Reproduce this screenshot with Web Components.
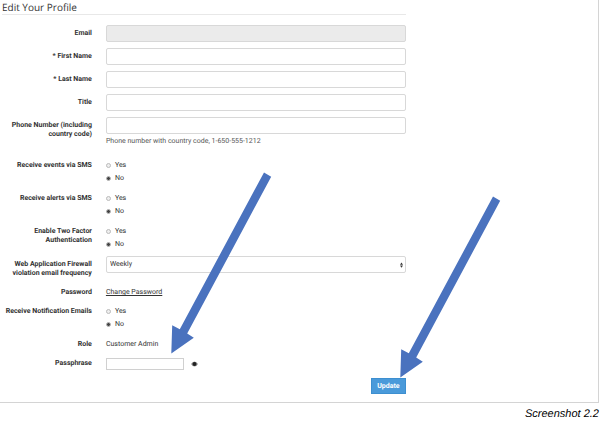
<!DOCTYPE html>
<html lang="en">
<head>
<meta charset="utf-8">
<meta name="viewport" content="width=device-width, initial-scale=1">
<title>Edit Your Profile</title>
<style>
  body {
    margin: 0;
    background: white;
    color: #333;
    font-family: Roboto, "Open Sans", sans-serif;
    font-size: 7px;
    line-height: 9px;
    text-rendering: geometricPrecision;
  }
</style>
</head>
<body>
<profile-page></profile-page>

<script>
  // Rules shared by every row: label column on the left, control on the right
  const rowStyles = `
    :host {
      display: block;
    }
    .row {
      display: grid;
      grid-template-columns: 3fr 10fr;
      column-gap: 14px;
    }
    .label {
      text-align: right;
      font-weight: 700;
    }
    .label.boxed {
      padding-top: 4px;
    }
    input, select {
      box-sizing: border-box;
      font: inherit;
      color: inherit;
      text-rendering: inherit;
    }
    .box {
      width: 100%;
      height: 17px;
      margin: 0;
      padding: 0 3px;
      border: 1px solid #d8d8d8;
      border-radius: 2px;
      background: white;
    }
  `;

  class TextField extends HTMLElement {
    constructor() {
      super();
      this.attachShadow({ mode: "open" });
    }

    connectedCallback() {
      const hint = this.getAttribute("hint");
      this.shadowRoot.innerHTML = `
        <style>
          ${rowStyles}
          .box:disabled {
            background: #ebebeb;
          }
          .hint {
            margin: 3px 0 5px;
            color: #555;
          }
        </style>
        <div class="row">
          <label class="label boxed" for="field">${this.getAttribute("label")}</label>
          <div>
            <input class="box" id="field" type="${this.getAttribute("type") || "text"}"
              ${this.hasAttribute("disabled") ? "disabled" : ""}>
            ${hint ? `<p class="hint">${hint}</p>` : ""}
          </div>
        </div>
      `;
    }
  }

  class RadioField extends HTMLElement {
    constructor() {
      super();
      this.attachShadow({ mode: "open" });
    }

    connectedCallback() {
      this.options = ["Yes", "No"];
      this.shadowRoot.innerHTML = `
        <style>
          ${rowStyles}
          :host {
            margin-top: 4px;
            padding-bottom: 1px;
          }
          .options {
            display: flex;
            flex-direction: column;
            align-items: flex-start;
            gap: 4px;
          }
          .option {
            display: flex;
            align-items: center;
            gap: 4px;
          }
          input {
            appearance: none;
            width: 5px;
            height: 5px;
            margin: 0;
            border: 1px solid #bbb;
            border-radius: 50%;
            background: #eee;
          }
          input:checked {
            background: #444;
          }
        </style>
        <div class="row">
          <span class="label" id="name">${this.getAttribute("label")}</span>
          <div class="options" role="radiogroup" aria-labelledby="name"></div>
        </div>
      `;
      this.renderOptions();
    }

    renderOptions() {
      const container = this.shadowRoot.querySelector(".options");
      this.options.forEach((text) => {
        const option = document.createElement("label");
        option.className = "option";
        option.innerHTML = `<input type="radio" name="choice" value="${text}"
          ${text === this.getAttribute("value") ? "checked" : ""}><span>${text}</span>`;
        container.appendChild(option);
      });
    }
  }

  class SelectField extends HTMLElement {
    constructor() {
      super();
      this.attachShadow({ mode: "open" });
    }

    connectedCallback() {
      const options = this.getAttribute("options").split(",");
      this.shadowRoot.innerHTML = `
        <style>
          ${rowStyles}
          .control {
            display: grid;
            align-items: center;
            align-self: start;
          }
          .control > * {
            grid-area: 1 / 1;
          }
          select {
            appearance: none;
          }
          svg {
            justify-self: end;
            margin-right: 3px;
            pointer-events: none;
          }
        </style>
        <div class="row">
          <label class="label boxed" for="field">${this.getAttribute("label")}</label>
          <div class="control">
            <select class="box" id="field">
              ${options.map((option) => `<option>${option}</option>`).join("")}
            </select>
            <svg width="3" height="6" viewBox="0 0 4 7" fill="#333" aria-hidden="true">
              <path d="M2 0L4 3H0zM0 4H4L2 7z"/>
            </svg>
          </div>
        </div>
      `;
    }
  }

  class StaticField extends HTMLElement {
    constructor() {
      super();
      this.attachShadow({ mode: "open" });
      this.shadowRoot.innerHTML = `
        <style>
          ${rowStyles}
          :host {
            margin-top: 4px;
          }
        </style>
        <div class="row">
          <span class="label"></span>
          <div><slot></slot></div>
        </div>
      `;
    }

    connectedCallback() {
      this.shadowRoot.querySelector(".label").textContent = this.getAttribute("label");
    }
  }

  class PassphraseField extends HTMLElement {
    constructor() {
      super();
      this.attachShadow({ mode: "open" });
      this.shadowRoot.innerHTML = `
        <style>
          ${rowStyles}
          .row, .control {
            align-items: center;
          }
          .control {
            display: flex;
            gap: 7px;
            height: 17px;
          }
          callout-arrow {
            --arrow-gap: 4px;
            flex: 0 0 26%;
          }
          input {
            display: block;
            width: 100%;
            height: 12px;
            margin: 0;
            padding: 0 3px;
            border: 1px solid #d0d0d0;
          }
          button {
            display: flex;
            padding: 0;
            border: 0;
            background: none;
          }
        </style>
        <div class="row">
          <label class="label" for="field">Passphrase</label>
          <div class="control">
            <callout-arrow><input id="field" type="password"></callout-arrow>
            <button type="button" aria-label="Show passphrase">
              <svg width="7" height="6" viewBox="0 0 14 12">
                <path d="M0 6Q3 1 7 1T14 6Q11 11 7 11T0 6z" fill="#999"/>
                <circle cx="7" cy="6" r="4" fill="#222"/>
              </svg>
            </button>
          </div>
        </div>
      `;
    }
  }

  // Wraps a control and draws a large arrow with its tip above the control's top edge
  class CalloutArrow extends HTMLElement {
    constructor() {
      super();
      this.attachShadow({ mode: "open" });
      this.shadowRoot.innerHTML = `
        <style>
          :host {
            display: block;
            position: relative;
          }
          svg {
            position: absolute;
            bottom: calc(100% + var(--arrow-gap, 0px));
            left: 84%;
            z-index: 1;
            pointer-events: none;
          }
        </style>
        <slot></slot>
        <svg width="101" height="182" viewBox="0 0 101 182" fill="#4a72be" aria-hidden="true">
          <path d="M0.3 181.6L1.2 153.2L8.8 157.3L93 0.4L100.2 4.7L16.2 161.6L22.8 165.8z"/>
        </svg>
      `;
    }
  }

  class PrimaryButton extends HTMLElement {
    constructor() {
      super();
      this.attachShadow({ mode: "open" });
      this.shadowRoot.innerHTML = `
        <style>
          :host {
            display: block;
          }
          button {
            display: block;
            height: 16px;
            padding: 0 5px;
            border: 1px solid #3d8fd0;
            background: #4a9ada;
            color: white;
            font: inherit;
            font-weight: 700;
            text-rendering: inherit;
          }
        </style>
        <button type="submit"><slot></slot></button>
      `;
    }
  }

  class ProfilePage extends HTMLElement {
    constructor() {
      super();
      this.attachShadow({ mode: "open" });
      this.shadowRoot.innerHTML = `
        <style>
          :host {
            display: block;
            padding-right: 3px;
          }
          .frame {
            padding-bottom: 8px;
            border-right: 1px solid #d4d4d4;
            border-bottom: 1px solid #d4d4d4;
          }
          form {
            box-sizing: border-box;
            display: flex;
            flex-direction: column;
            gap: 6px;
            width: 68%;
            padding: 0 1px 0 2px;
          }
          h1 {
            margin: 0 0 4px;
            border-bottom: 1px solid #e8e8e8;
            font-family: "Open Sans", sans-serif;
            font-size: 10px;
            font-weight: 400;
            line-height: 14px;
          }
          a {
            color: inherit;
          }
          .actions {
            display: flex;
            justify-content: flex-end;
          }
          figcaption {
            margin-top: 4px;
            color: black;
            font: italic 11px/14px "Liberation Sans", Arial, sans-serif;
            text-align: right;
          }
          figure {
            margin: 0;
          }
        </style>
        <figure>
          <div class="frame">
            <form>
              <h1>Edit Your Profile</h1>
              <text-field label="Email" type="email" disabled></text-field>
              <text-field label="* First Name"></text-field>
              <text-field label="* Last Name"></text-field>
              <text-field label="Title"></text-field>
              <text-field label="Phone Number (including country code)" type="tel"
                hint="Phone number with country code, 1-650-555-1212"></text-field>
              <radio-field label="Receive events via SMS" value="No"></radio-field>
              <radio-field label="Receive alerts via SMS" value="No"></radio-field>
              <radio-field label="Enable Two Factor Authentication" value="No"></radio-field>
              <select-field label="Web Application Firewall violation email frequency"
                options="Weekly"></select-field>
              <static-field label="Password"><a href="#password">Change Password</a></static-field>
              <radio-field label="Receive Notification Emails" value="No"></radio-field>
              <static-field label="Role">Customer Admin</static-field>
              <passphrase-field></passphrase-field>
              <div class="actions">
                <callout-arrow><primary-button>Update</primary-button></callout-arrow>
              </div>
            </form>
          </div>
          <figcaption>Screenshot 2.2</figcaption>
        </figure>
      `;
    }
  }

  customElements.define("text-field", TextField);
  customElements.define("radio-field", RadioField);
  customElements.define("select-field", SelectField);
  customElements.define("static-field", StaticField);
  customElements.define("callout-arrow", CalloutArrow);
  customElements.define("passphrase-field", PassphraseField);
  customElements.define("primary-button", PrimaryButton);
  customElements.define("profile-page", ProfilePage);
</script>
</body>
</html>
